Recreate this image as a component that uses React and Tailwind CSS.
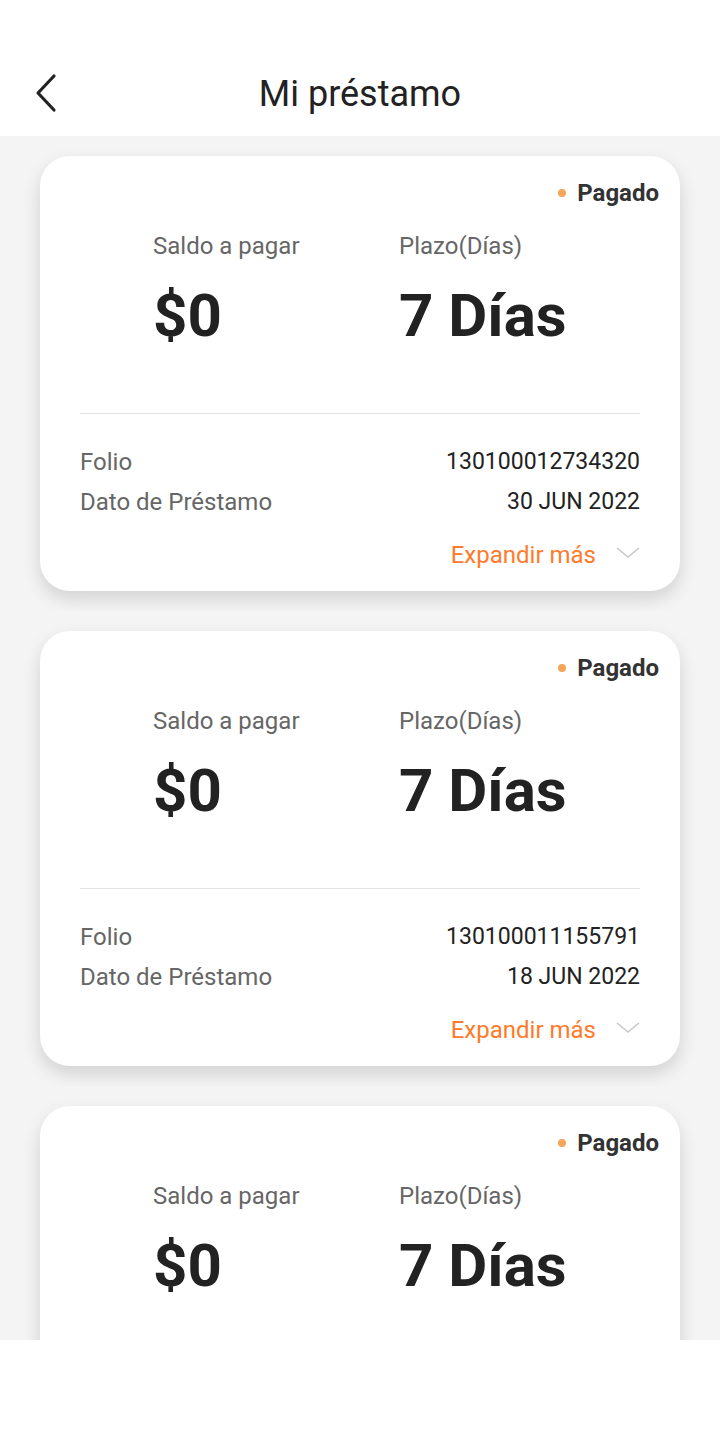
import React from "react";

const loans = [
  { folio: "130100012734320", fecha: "30 JUN 2022" },
  { folio: "130100011155791", fecha: "18 JUN 2022" },
  { folio: "130100010000000", fecha: "10 JUN 2022" },
];

function LoanCard({ loan }) {
  return (
    <div className="overflow-hidden bg-[#f4f4f4] px-[40px] py-[20px]">
      <div className="h-[435px] rounded-[30px] bg-white shadow-[0_8px_18px_rgba(0,0,0,0.14)]">
        {/* Estado */}
        <div className="flex items-center justify-end pr-[21px] pt-[23px] h-[51px]">
          <span className="mr-[11px] h-[8px] w-[8px] rounded-full bg-[#f5a45a]" />
          <span className="text-[24px] font-bold leading-[28px] text-[#333]">Pagado</span>
        </div>
        <div className="mt-[25px] flex pl-[113px]">
          <div className="w-[246px]">
            <div className="text-[24px] leading-[28px] text-[#666]">Saldo a pagar</div>
            <div className="mt-[21px] text-[60px] font-bold leading-[70px] text-[#222]">$0</div>
          </div>
          <div>
            <div className="text-[24px] leading-[28px] text-[#666]">Plazo(Días)</div>
            <div className="mt-[21px] text-[60px] font-bold leading-[70px] text-[#222]">7 Días</div>
          </div>
        </div>
        <div className="mx-[40px] mt-[62px] border-t border-[#e3e3e3]" />
        <div className="px-[40px] pt-[34px]">
          <div className="flex justify-between leading-[28px]">
            <span className="text-[24px] text-[#666]">Folio</span>
            <span className="text-[23px] text-[#222]">{loan.folio}</span>
          </div>
          <div className="mt-[12px] flex justify-between leading-[28px]">
            <span className="text-[24px] text-[#666]">Dato de Préstamo</span>
            <span className="text-[23px] text-[#222]">{loan.fecha}</span>
          </div>
          <div className="mt-[25px] flex items-center justify-end">
            <span className="text-[24px] leading-[28px] text-[#ff7a2b]">Expandir más</span>
            <svg width="24" height="14" viewBox="0 0 24 14" className="ml-[20px] -mt-[4px]">
              <path d="M1 2 L12 11 L23 2" fill="none" stroke="#c8c8c8" strokeWidth="1.6" />
            </svg>
          </div>
        </div>
      </div>
    </div>
  );
}

export default function App() {
  return (
    <div className="w-[720px] h-[1440px] bg-white font-['Roboto',sans-serif] flex flex-col">
      <div className="h-[136px] flex items-end pb-[22px] relative">
        <svg width="30" height="40" viewBox="0 0 30 40" className="absolute left-[30px] top-[73px]">
          <path d="M24 3 L8 20 L24 37" fill="none" stroke="#222" strokeWidth="3.2" strokeLinecap="round" strokeLinejoin="round" />
        </svg>
        <div className="w-full text-center text-[36px] leading-[40px] text-[#222]">Mi préstamo</div>
      </div>
      <div className="h-[1204px] overflow-hidden bg-[#f4f4f4]">
        {loans.map((l, i) => (
          <LoanCard key={i} loan={l} />
        ))}
      </div>
    </div>
  );
}
